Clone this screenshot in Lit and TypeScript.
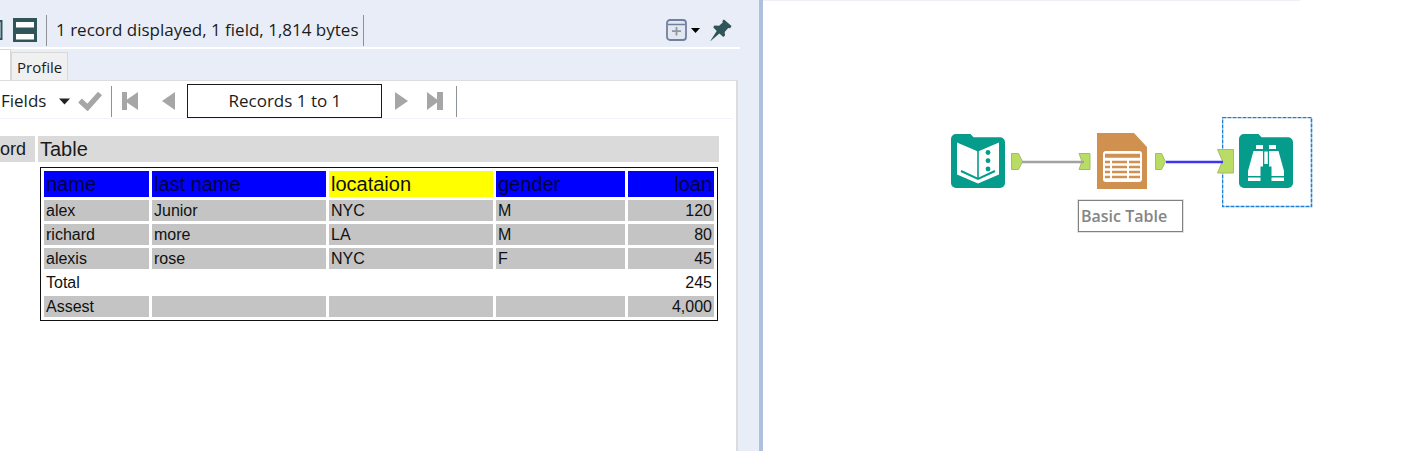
import { LitElement, html, css, svg } from "lit";
import { customElement } from "lit/decorators.js";
import { classMap } from "lit/directives/class-map.js";
import { styleMap } from "lit/directives/style-map.js";

const COLUMNS = [
  { label: "name", width: 105 },
  { label: "last name", width: 174 },
  { label: "locataion", width: 164, highlight: true },
  { label: "gender", width: 129 },
  { label: "loan", width: 86, numeric: true },
];

const ROWS = [
  { cells: ["alex", "Junior", "NYC", "M", "120"] },
  { cells: ["richard", "more", "LA", "M", "80"] },
  { cells: ["alexis", "rose", "NYC", "F", "45"] },
  { cells: ["Total", "", "", "", "245"], plain: true },
  { cells: ["Assest", "", "", "", "4,000"] },
];

@customElement("report-table")
class ReportTable extends LitElement {
  static styles = css`
    :host { display: block; }
    .report {
      width: 100%;
      table-layout: fixed;
      border: 1px solid #111;
      border-collapse: separate;
      border-spacing: 3px;
      color: #111;
      font: 16px/21px "Liberation Sans", Arial, sans-serif;
    }
    .head {
      box-sizing: border-box;
      padding: 0 2px;
      background: #00f;
      font-size: 20px;
      font-weight: 400;
      line-height: 26px;
      text-align: left;
      color: #00003c;
    }
    .head.highlight { background: #ff0; color: #111; }
    .cell { height: 21px; padding: 0 2px; background: #c4c4c4; }
    .plain .cell { background: #fff; }
    .head.numeric, .cell.numeric { text-align: right; }
  `;
  render() {
    return html`<table class="report">
      <thead>
        <tr>
          ${COLUMNS.map(
            (c) => html`<th
              scope="col"
              class=${classMap({ head: true, highlight: !!c.highlight, numeric: !!c.numeric })}
              style=${styleMap({ width: `${(c.width / 658) * 100}%` })}
            >${c.label}</th>`
          )}
        </tr>
      </thead>
      <tbody>
        ${ROWS.map(
          (r) => html`<tr class=${classMap({ plain: !!r.plain })}>
            ${r.cells.map(
              (t, i) => html`<td class=${classMap({ cell: true, numeric: !!COLUMNS[i].numeric })}>${t}</td>`
            )}
          </tr>`
        )}
      </tbody>
    </table>`;
  }
}

@customElement("results-pane")
class ResultsPane extends LitElement {
  static styles = css`
    :host {
      display: flex;
      flex-direction: column;
      min-width: 0;
      box-sizing: border-box;
      background: #e9edf8;
      border-right: 4px solid #afbfe0;
      color: #1b1b1b;
      font: 17px/24px "Open Sans", "Segoe UI", sans-serif;
    }
    button {
      display: flex;
      align-items: center;
      justify-content: center;
      padding: 0;
      border: 0;
      background: none;
      color: inherit;
      font: inherit;
    }
    svg { display: block; }
    .summary {
      display: flex;
      align-items: center;
      height: 32px;
      margin-right: 19px;
      padding: 14px 8px 1px 0;
      border-bottom: 2px solid #fff;
    }
    .rule { flex: none; width: 1px; height: 31px; background: #8e9299; }
    .layouts { display: flex; gap: 10px; margin-right: 9px; }
    .count { padding: 0 4px 0 9px; white-space: nowrap; }
    .window { margin-left: auto; display: flex; align-items: center; }
    .window .menu { gap: 4px; margin-right: 10px; }
    .tabs { display: flex; align-items: flex-end; height: 31px; }
    .tab {
      box-sizing: border-box;
      height: 28px;
      padding: 0 5px;
      border: 1px solid #d8d8d8;
      border-bottom: 0;
      background: #f0f0f0;
      font-size: 15px;
    }
    .tab.current { height: 31px; width: 11px; padding: 0; border-left: 0; background: #fff; }
    .sheet {
      flex: 1;
      margin-right: 21px;
      background: #fff;
      border: solid #dcdcdc;
      border-width: 1px 2px 0 0;
    }
    .tools {
      display: flex;
      align-items: center;
      height: 34px;
      padding-top: 3px;
      margin-right: 3px;
      border-bottom: 1px solid #f3f4fb;
    }
    .fields { gap: 13px; padding-left: 1px; }
    .check { margin: 0 9px 0 8px; }
    .first { margin: 0 23px 0 9px; }
    .range {
      box-sizing: border-box;
      width: 195px;
      height: 34px;
      margin: 0 13px 0 12px;
      border: 1px solid #1b1b1b;
      background: #fff;
    }
    .last { margin: 0 12px 0 18px; }
    .records {
      width: calc(100% - 11px);
      margin: 14px 0 0 -3px;
      border-collapse: separate;
      border-spacing: 3px;
    }
    .caption {
      padding: 0 2px;
      background: #dadada;
      font: 20px/26px "Liberation Sans", Arial, sans-serif;
      text-align: left;
    }
    .caption.index { width: 27px; padding: 0 8px 0 0; font-size: 18px; }
    .body { padding: 2px 1px 2px 2px; }
  `;
  render() {
    return html`
      <header class="summary">
        <div class="layouts">
          <button aria-label="Metadata layout">
            <svg width="3" height="24"><path d="M0 3h1.500v18H0" fill="none" stroke="#2f5459" stroke-width="2" /></svg>
          </button>
          <button aria-label="Split layout">
            <svg width="24" height="24">
              <path fill="#2f5459" d="M0 0h24v24H0z" />
              <path fill="#fdfdfd" d="M3 4h18v5.500H3zM3 16h18v5.500H3z" />
            </svg>
          </button>
        </div>
        <span class="rule"></span>
        <span class="count">1 record displayed, 1 field, 1,814 bytes</span>
        <span class="rule"></span>
        <div class="window">
          <button class="menu" aria-label="New window">
            <svg width="21" height="22" fill="none">
              <rect x="1" y="1" width="19" height="20" rx="3" fill="#e3e7f0" stroke="#71809f" stroke-width="1.800" />
              <path d="M2 5.500h17" stroke="#71809f" stroke-width="1.500" />
              <path d="M10.500 8v8.500M6 12.200h9" stroke="#8d96a8" stroke-width="1.800" />
            </svg>
            <svg width="9" height="5"><path d="M0 0h9L4.500 5z" fill="#000" /></svg>
          </button>
          <button aria-label="Pin">
            <svg width="22" height="23">
              <path fill="#2f5459" d="M14 0.500L21.500 7l-1.300 2.200-2-.3-3.500 4 .3 3.600-1.700 1.500-3.900-3.600L0 22.500 6.700 12 3.200 8.200l1.300-1.700 4.600.2 3.600-3.300-.3-1.600z" />
            </svg>
          </button>
        </div>
      </header>
      <nav class="tabs">
        <button class="tab current" aria-label="Data"></button>
        <button class="tab">Profile</button>
      </nav>
      <section class="sheet">
        <div class="tools">
          <button class="fields">Fields
            <svg width="11" height="7"><path d="M0 .5h11L5.500 6.500z" fill="#222" /></svg>
          </button>
          <button class="check" aria-label="Apply">
            <svg width="24" height="20"><path d="M2 9.500l7.500 7L22 2.500" fill="none" stroke="#a6a6a6" stroke-width="5.400" /></svg>
          </button>
          <span class="rule"></span>
          <button class="first" aria-label="First records">
            <svg width="18" height="18"><path d="M1 0h5v7.500L17 0v18L6 10.500V18H1z" fill="#a6a6a6" /></svg>
          </button>
          <button aria-label="Previous records">
            <svg width="13" height="18"><path d="M13 0v18L0 9z" fill="#a6a6a6" /></svg>
          </button>
          <button class="range">Records 1 to 1</button>
          <button aria-label="Next records">
            <svg width="13" height="18"><path d="M0 0v18l13-9z" fill="#a6a6a6" /></svg>
          </button>
          <button class="last" aria-label="Last records">
            <svg width="18" height="18"><path d="M17 0h-6v7.500L1 0v18l10-7.500V18h6z" fill="#a6a6a6" /></svg>
          </button>
          <span class="rule"></span>
        </div>
        <table class="records">
          <thead>
            <tr><th class="caption index" scope="col">ord</th><th class="caption" scope="col">Table</th></tr>
          </thead>
          <tbody>
            <tr><td></td><td class="body"><report-table></report-table></td></tr>
          </tbody>
        </table>
      </section>
    `;
  }
}

const folder = svg`<path fill="#059c8c" d="M5 0h14.500l3 3.300H49a5 5 0 0 1 5 5V49a5 5 0 0 1-5 5H5a5 5 0 0 1-5-5V5a5 5 0 0 1 5-5z" />`;

const ICONS = {
  input: svg`${folder}
    <path fill="#fff" d="M6 8.500l21 9 21-9v32L27 49.500 6 40.500z" />
    <path d="M27 17v27" stroke="#059c8c" stroke-width="1.600" />
    <path d="M10 37l17 8 17-8" fill="none" stroke="#059c8c" stroke-width="2" />
    <circle cx="37" cy="18.500" r="2.400" fill="#059c8c" />
    <circle cx="37" cy="26.700" r="2.400" fill="#059c8c" />
    <circle cx="37" cy="35" r="2.400" fill="#059c8c" />`,
  table: svg`<path fill="#cf9050" d="M0 0h37l13 14v42H0z" />
    <rect x="6" y="18" width="39" height="31" rx="3" fill="#fff" />
    <path d="M8 22.800h35" stroke="#cf9050" stroke-width="4" />
    <path d="M8 29h5M15 29h15M32 29h11M8 34h5M15 34h15M32 34h11M8 39h5M15 39h15M32 39h11M8 44h5M15 44h15M32 44h11" stroke="#cf9050" stroke-width="2.400" />`,
  browse: svg`${folder}
    <path fill="#fff" d="M17 11h7v4h-7zM30 11h7v4h-7zM14.500 17H24v15.500h-2.500V42H9v-5zM30 17h9.500l5.500 20v5H32.500v-9.500H30zM25.300 17.500h3.500V30h-3.500zM9 43.500h12.500V47H9zM32.500 43.500H45V47H32.500z" />`,
};

@customElement("workflow-canvas")
class WorkflowCanvas extends LitElement {
  static styles = css`
    :host { display: block; position: relative; min-width: 0; overflow: hidden; background: #fff; }
    .edge { width: calc(100% - 111px); height: 1px; background: #eef0f6; }
    .links, .node, .note, .selection { position: absolute; }
    .links { left: 0; top: 0; }
    .selection {
      left: 459px;
      top: 117px;
    }
    .note {
      left: 315px;
      top: 200px;
      padding: 3px 15px 3px 2px;
      border: 1px solid #808080;
      outline: 1px solid #e3e3e3;
      background: #fff;
      color: #858585;
      font: 600 16px/24px "Open Sans", "Segoe UI", sans-serif;
      white-space: nowrap;
    }
  `;
  private nodes = [
    { icon: "input", label: "Text Input", x: 188, y: 134, w: 54, h: 54 },
    { icon: "table", label: "Basic Table", x: 334, y: 133, w: 50, h: 56 },
    { icon: "browse", label: "Browse", x: 476, y: 134, w: 54, h: 54 },
  ];
  render() {
    return html`
      <div class="edge"></div>
      <svg class="selection" width="91" height="91">
        <rect x="0.500" y="0.500" width="89" height="89" fill="none" stroke="#1c7fd8" stroke-width="1.600" stroke-dasharray="4 1" />
      </svg>
      <svg class="links" width="560" height="240">
        <g fill="#b9dc64" stroke="#a4bd68" stroke-width="1">
          <path d="M248.500 153.500h7l4 8-4 8h-7z" />
          <path d="M316 153.500h11v16h-11l3-8z" />
          <path d="M392.500 153.500h6l4 8-4 8h-6z" />
          <path d="M454.500 149.500h16v23.500h-16l5-12z" />
        </g>
        <path d="M259 162h62" stroke="#a3a0a0" stroke-width="2.500" />
        <path d="M403 162h57" stroke="#3c37f2" stroke-width="2.600" />
      </svg>
      ${this.nodes.map(
        (n) => html`<svg
          class="node"
          role="img"
          aria-label=${n.label}
          width=${n.w}
          height=${n.h}
          style=${styleMap({ left: `${n.x}px`, top: `${n.y}px` })}
        >${ICONS[n.icon]}</svg>`
      )}
      <div class="note">Basic Table</div>
    `;
  }
}

@customElement("app-root")
class AppRoot extends LitElement {
  static styles = css`
    :host {
      display: grid;
      grid-template-columns: 763fr 648fr;
      min-height: 100vh;
      overflow: hidden;
    }
  `;
  render() {
    return html`<results-pane></results-pane><workflow-canvas></workflow-canvas>`;
  }
}
